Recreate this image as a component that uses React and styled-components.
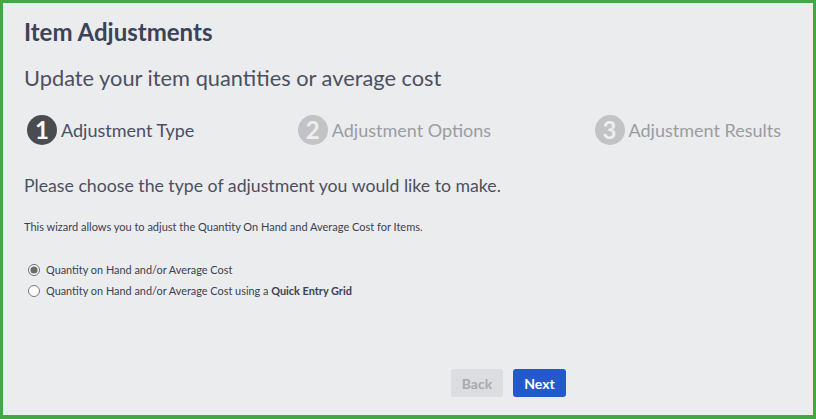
import React, { useState } from "react"
import styled, { createGlobalStyle } from "styled-components"

const GlobalStyle = createGlobalStyle`
  html, body {
    margin: 0;
    padding: 0;
    background: #ebecee;
  }
  body {
    font-family: Lato, "Open Sans", sans-serif;
  }
`

const Frame = styled.div`
  box-sizing: border-box;
  width: 816px;
  height: 419px;
  border: 3px solid #43a843;
  border-bottom-width: 4px;
  background: #ebecee;
  padding: 14px 21px 0 21px;
  display: flex;
  flex-direction: column;
`

const Title = styled.h1`
  margin: 0;
  font-size: 24px;
  font-weight: 700;
  color: #3c4257;
  line-height: 30px;
`

const Subtitle = styled.h2`
  margin: 17px 0 0;
  font-size: 21.8px;
  font-weight: 400;
  color: #4b5060;
  line-height: 28px;
`

const Steps = styled.div`
  display: flex;
  justify-content: space-between;
  align-items: center;
  margin-top: 23px;
  padding: 0 11px 0 3px;
`

const Step = styled.div`
  display: flex;
  align-items: center;
  gap: 4px;
  font-size: 18px;
  color: ${p => (p.active ? "#4a4f5e" : "#9a9ca3")};
`

const Badge = styled.span`
  width: 30px;
  height: 30px;
  border-radius: 50%;
  background: ${p => (p.active ? "#4b4c51" : "#c2c3c5")};
  color: ${p => (p.active ? "#ffffff" : "#eeeeee")};
  font-weight: 700;
  font-size: 24px;
  display: flex;
  align-items: center;
  justify-content: center;
  line-height: 1;
`

const Prompt = styled.p`
  margin: 29px 0 0;
  font-size: 17.7px;
  color: #4b5060;
  line-height: 24px;
`

const Note = styled.p`
  margin: 22px 0 0;
  font-size: 11px;
  color: #3c4150;
  line-height: 14px;
`

const Options = styled.div`
  display: flex;
  flex-direction: column;
  gap: 8px;
  margin-top: 29px;
  padding-left: 4px;
`

const Option = styled.label`
  display: flex;
  align-items: center;
  gap: 6px;
  font-size: 10.9px;
  color: #3c4150;
  cursor: pointer;

  b {
    font-weight: 700;
  }
`

const Radio = styled.input.attrs({ type: "radio" })`
  margin: 0;
  width: 12px;
  height: 12px;
  accent-color: #6b6b6b;
`

const Footer = styled.div`
  margin-top: auto;
  display: flex;
  gap: 10px;
  padding: 0 0 18px 427px;
`

const Button = styled.button`
  font-family: Lato, sans-serif;
  font-size: 14px;
  font-weight: 700;
  height: 28px;
  border: none;
  border-radius: 3px;
  padding: 0 10px;
  background: ${p => (p.primary ? "#2459c9" : "#dcdde0")};
  color: ${p => (p.primary ? "#ffffff" : "#a8a9ad")};
  min-width: ${p => (p.primary ? "53px" : "52px")};
`

const steps = ["Adjustment Type", "Adjustment Options", "Adjustment Results"]

const App = () => {
  const [choice, setChoice] = useState("standard")

  return (
    <>
      <GlobalStyle />
      <Frame>
        <Title>Item Adjustments</Title>
        <Subtitle>Update your item quantities or average cost</Subtitle>
        <Steps>
          {steps.map((s, i) => (
            <Step key={s} active={i === 0}>
              <Badge active={i === 0}>{i + 1}</Badge>
              {s}
            </Step>
          ))}
        </Steps>
        <Prompt>Please choose the type of adjustment you would like to make.</Prompt>
        <Note>
          This wizard allows you to adjust the Quantity On Hand and Average Cost for Items.
        </Note>
        <Options>
          <Option>
            <Radio
              name="kind"
              checked={choice === "standard"}
              onChange={() => setChoice("standard")}
            />
            Quantity on Hand and/or Average Cost
          </Option>
          <Option>
            <Radio
              name="kind"
              checked={choice === "grid"}
              onChange={() => setChoice("grid")}
            />
            <span>
              Quantity on Hand and/or Average Cost using a <b>Quick Entry Grid</b>
            </span>
          </Option>
        </Options>
        <Footer>
          <Button disabled>Back</Button>
          <Button primary>Next</Button>
        </Footer>
      </Frame>
    </>
  )
}

export default App
